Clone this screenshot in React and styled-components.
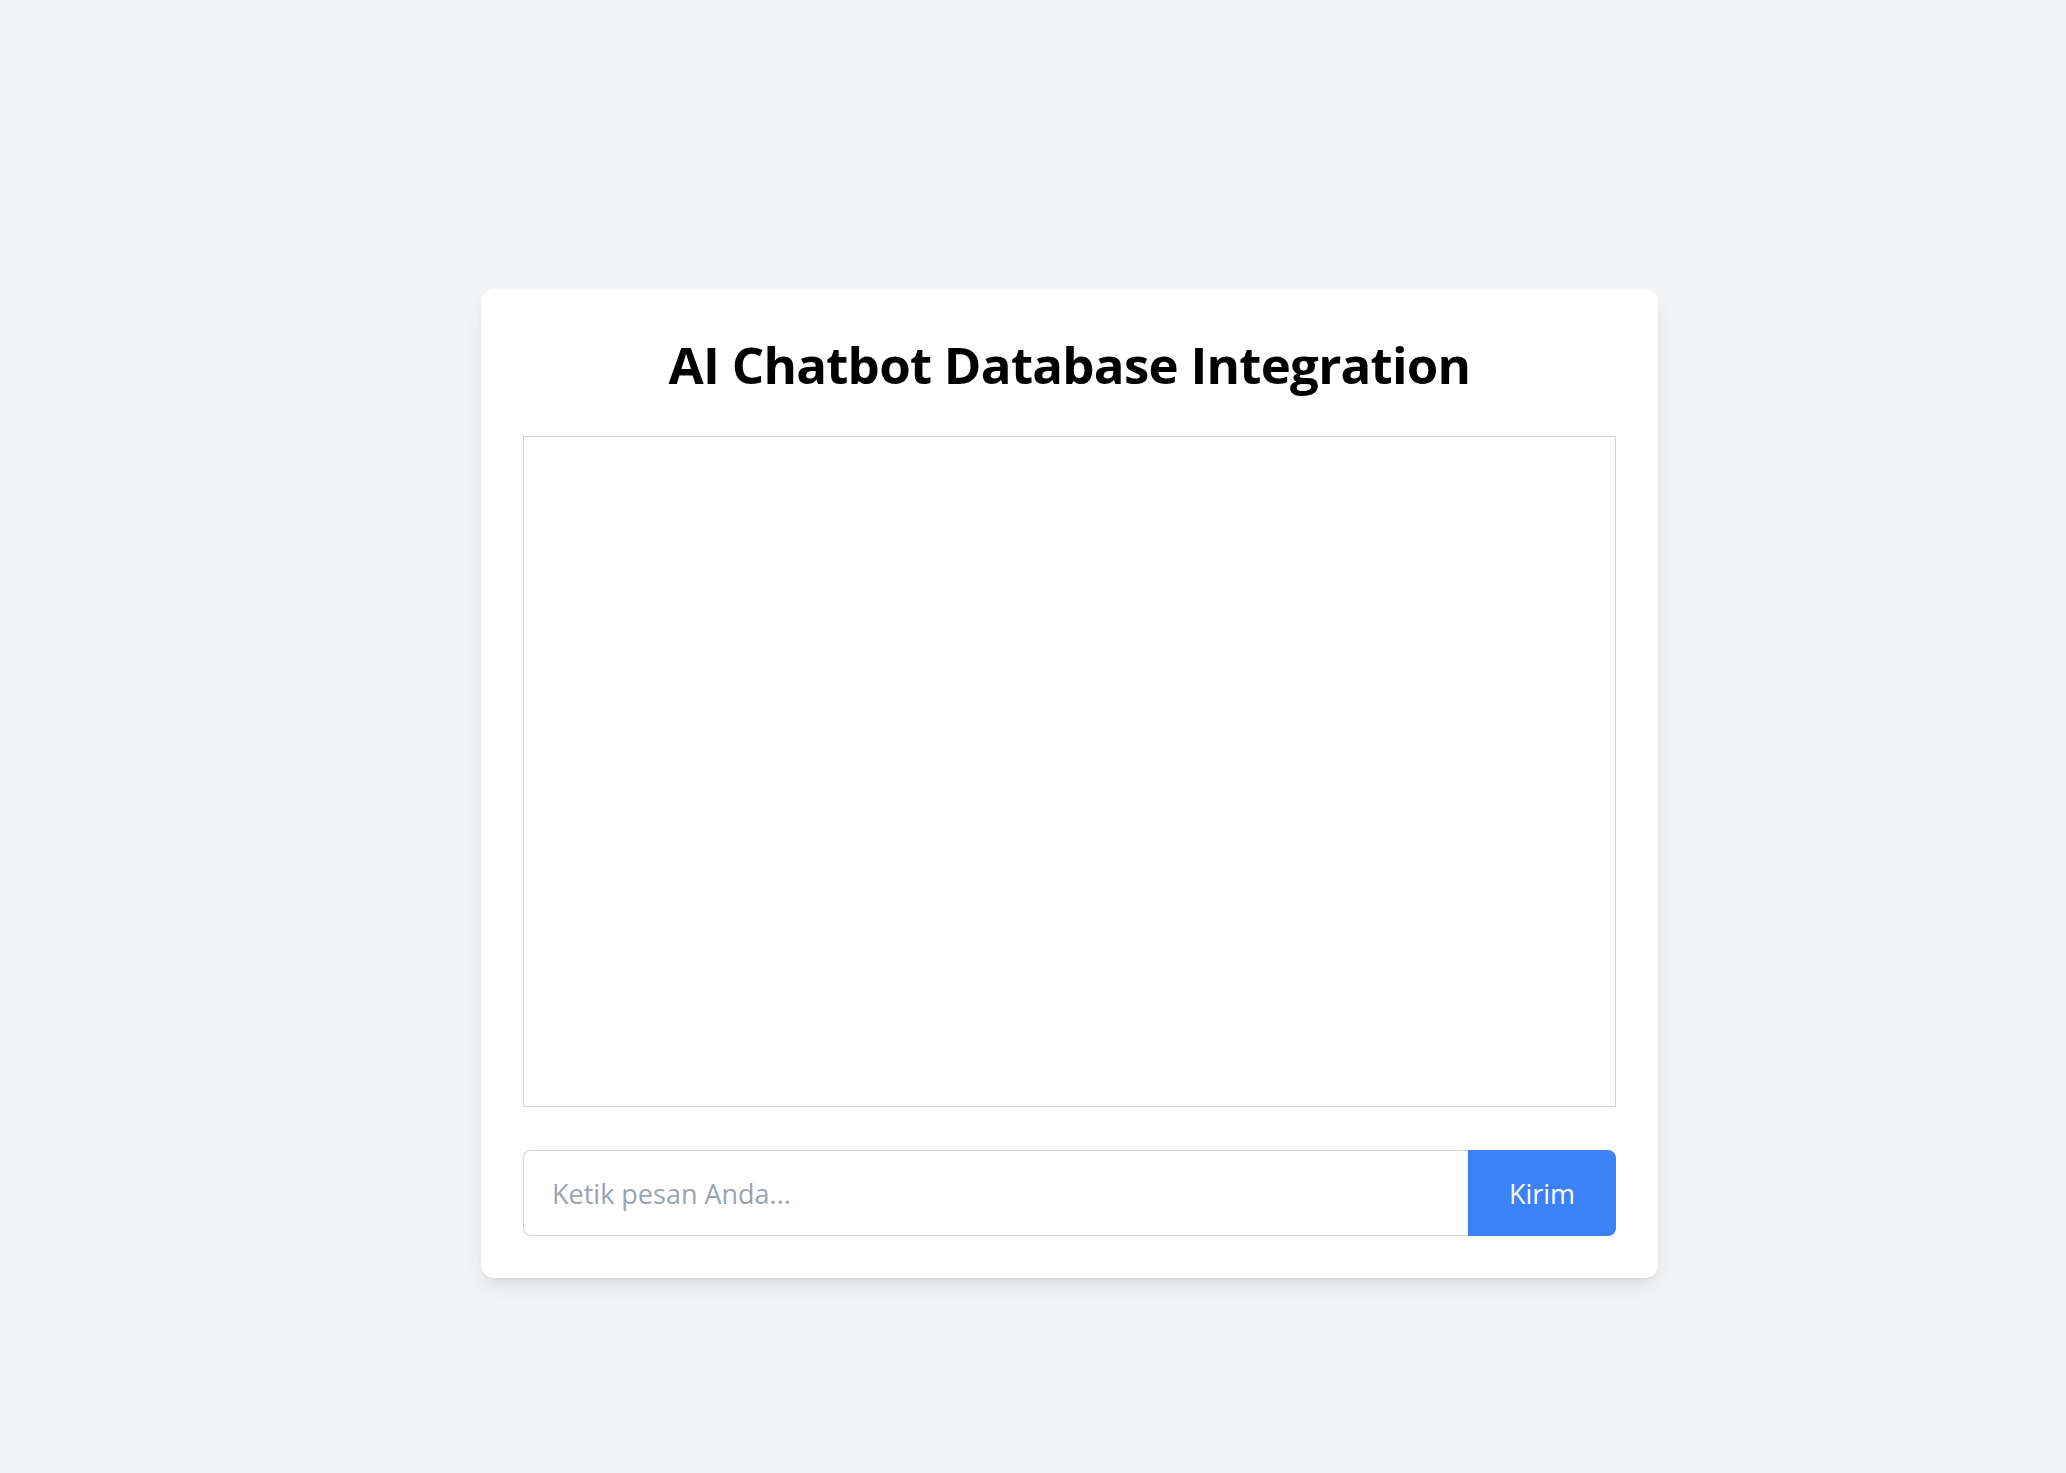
import styled, { createGlobalStyle } from "styled-components";

const GlobalStyle = createGlobalStyle`
	html, body {
		margin: 0;
		padding: 0;
		background: #f3f4f6;
		font-family: "Segoe UI", "Open Sans", "Noto Sans", sans-serif;
	}
	* {
		box-sizing: border-box;
	}
`;

const Page = styled.div`
	min-height: 100vh;
	display: flex;
	justify-content: center;
	align-items: center;
	padding: 94px 0 0 73px;
`;

const Card = styled.div`
	width: 1177px;
	background: #ffffff;
	border-radius: 13px;
	padding: 42px;
	box-shadow: 0 10px 20px -4px rgba(0, 0, 0, 0.1), 0 4px 8px -4px rgba(0, 0, 0, 0.08);
`;

const Title = styled.h1`
	margin: 0 0 39px;
	text-align: center;
	font-size: 51px;
	line-height: 66px;
	font-weight: 700;
	letter-spacing: -0.75px;
	color: #000000;
`;

const ChatBox = styled.div`
	height: 671px;
	border: 1px solid #d1d5db;
	overflow-y: auto;
`;

const InputRow = styled.form`
	display: flex;
	margin-top: 43px;
	height: 86px;
`;

const MessageInput = styled.input`
	flex: 1;
	min-width: 0;
	border: 1px solid #d1d5db;
	border-right: none;
	border-radius: 8px 0 0 8px;
	padding: 0 28px;
	font-family: inherit;
	font-size: 27px;
	color: #111827;
	outline: none;

	&::placeholder {
		color: #9ca3af;
	}
`;

const SendButton = styled.button`
	width: 148px;
	border: none;
	border-radius: 0 8px 8px 0;
	background: #3b82f6;
	color: #ffffff;
	font-family: inherit;
	font-size: 27px;
	cursor: pointer;
`;

const App = () => {
	return (
		<>
			<GlobalStyle />
			<Page>
				<Card>
					<Title>AI Chatbot Database Integration</Title>
					<ChatBox />
					<InputRow onSubmit={e => e.preventDefault()}>
						<MessageInput type="text" placeholder="Ketik pesan Anda..." />
						<SendButton type="submit">Kirim</SendButton>
					</InputRow>
				</Card>
			</Page>
		</>
	);
};

export default App;
